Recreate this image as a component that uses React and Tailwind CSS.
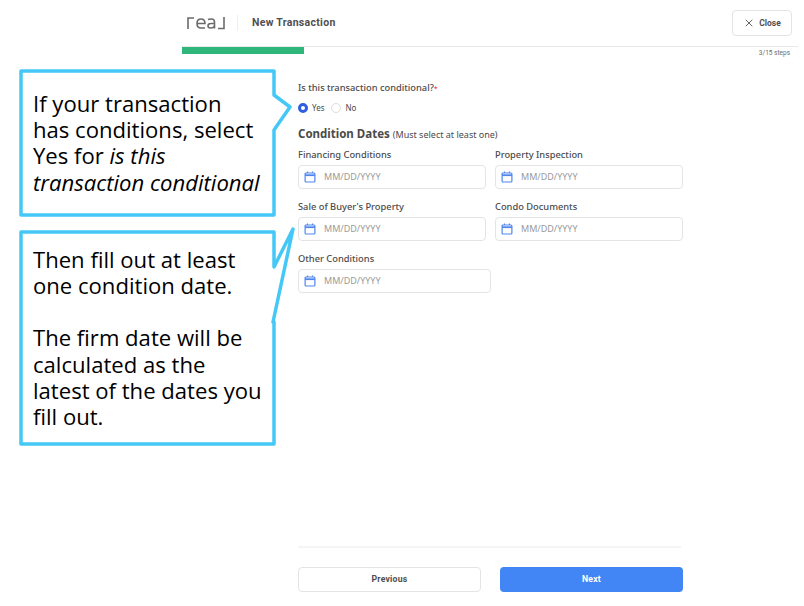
import { X } from 'lucide-react';

const ui = { fontFamily: '"Noto Sans", sans-serif' };

function CalendarIcon() {
  return (
    <svg width="12" height="12" viewBox="0 0 12 12" fill="none" stroke="#4f86f0" strokeWidth="1.2">
      <rect x="1.1" y="2" width="9.8" height="9" rx="1" />
      <path d="M1.1 4.2H10.9" strokeWidth="1.8" />
      <path d="M3.5 0.6V2M8.5 0.6V2" />
    </svg>
  );
}

function DateField({ label, wide }) {
  return (
    <div>
      <div className="h-[12px] text-[9.3px] leading-[12px] font-medium text-[#4b4b4b]">{label}</div>
      <div
        className={`mt-[4px] flex h-[24px] items-center rounded-[4px] border border-[#e3e4e8] pl-[5px] ${wide ? 'w-[193px]' : 'w-[188px]'}`}
      >
        <CalendarIcon />
        <span className="ml-[8px] text-[9px] text-[#9a9a9a]">MM/DD/YYYY</span>
      </div>
    </div>
  );
}

function Logo() {
  return (
    <svg width="38" height="14" viewBox="0 0 38 14" fill="none" stroke="#6b6b6b" strokeWidth="1.6">
      <path d="M1 13V2H7" />
      <path d="M10 7.5H18C18 4.5 16.5 3 14 3C11.5 3 10 5 10 7.5C10 10.5 11.5 12 14 12H18" />
      <path d="M21 3.5C22 3 23 3 24.5 3C26.5 3 27.5 4 27.5 6V12.5M27.5 7.5H24C22 7.5 21 8.5 21 10C21 11.5 22 12 23.5 12C25.5 12 27.5 11 27.5 9" />
      <path d="M37 1V12.5H31" />
    </svg>
  );
}

export default function App() {
  return (
    <div className="relative flex h-[606px] w-[804px] flex-col overflow-hidden bg-white" style={ui}>
      {/* Top bar */}
      <div className="flex h-[46px] items-center pl-[187px] pr-[12px]">
        <Logo />
        <div className="ml-[12px] h-[16px] w-px bg-[#eeeeee]" />
        <span
          className="ml-[14px] text-[10.5px] font-bold tracking-[0.3px] text-[#4f4f4f]"
          style={{ fontFamily: 'Roboto, sans-serif' }}
        >
          New Transaction
        </span>
        <div
          className="ml-auto flex h-[26px] w-[60px] items-center justify-center gap-[4px] rounded-[4px] border border-[#e3e4e8] text-[8.5px] font-bold text-[#4f4f4f]"
          style={{ fontFamily: 'Roboto, sans-serif' }}
        >
          <X size={12} strokeWidth={1.75} />
          Close
        </div>
      </div>

      {/* Progress */}
      <div className="ml-[182px] mr-[6px] border-t border-[#e8e8e8]">
        <div className="flex h-[7px]">
          <div className="w-[122px] bg-[#2fb67a]" />
        </div>
        <div
          className="-mt-[5px] pr-[8px] text-right text-[6.5px] leading-[8px] text-[#6b6b6b]"
          style={{ fontFamily: 'Roboto, sans-serif' }}
        >
          3/15 steps
        </div>
      </div>

      {/* Form */}
      <div className="ml-[298px] flex w-[385px] flex-1 flex-col pt-[25px] pb-[14px]">
        <div className="h-[12px] text-[9.3px] leading-[12px] font-medium text-[#4b4b4b]">
          Is this transaction conditional?<span className="text-[7px] text-[#e5484d]">*</span>
        </div>
        <div className="mt-[8px] flex h-[12px] items-center text-[8px] text-[#4b4b4b]">
          <span className="h-[10px] w-[10px] rounded-full border-[3px] border-[#2f5fe0] bg-white" />
          <span className="ml-[4px]">Yes</span>
          <span className="ml-[7px] h-[10px] w-[10px] rounded-full border border-[#dddddd]" />
          <span className="ml-[4px]">No</span>
        </div>
        <div className="mt-[11px] flex h-[16px] items-baseline text-[#4b4b4b]">
          <span className="text-[11.5px] font-bold">Condition Dates</span>
          <span className="ml-[3px] text-[9px]">(Must select at least one)</span>
        </div>
        <div className="mt-[8px] grid grid-cols-[188px_188px] gap-x-[9px] gap-y-[12px]">
          <DateField label="Financing Conditions" />
          <DateField label="Property Inspection" />
          <DateField label="Sale of Buyer's Property" />
          <DateField label="Condo Documents" />
          <DateField label="Other Conditions" wide />
        </div>

        <div className="mt-auto h-[2px] w-[383px] bg-[#f5f5f6]" />
        <div
          className="mt-[19px] flex gap-[19px] text-[8.7px] font-bold tracking-[0.2px]"
          style={{ fontFamily: 'Roboto, sans-serif' }}
        >
          <div className="flex h-[25px] w-[183px] items-center justify-center rounded-[4px] border-[1.5px] border-[#e3e4e8] text-[#4f4f4f]">
            Previous
          </div>
          <div className="flex h-[25px] w-[183px] items-center justify-center rounded-[4px] bg-[#4285f5] text-white">
            Next
          </div>
        </div>
      </div>

      {/* Callouts over the page */}
      <div
        className="absolute top-0 left-0 h-[606px] w-[300px] text-[22.1px] leading-[26.2px] text-black"
        style={{ fontFamily: '"Open Sans", sans-serif' }}
      >
        <svg width="300" height="460" className="absolute top-0 left-0" fill="white" stroke="#45c8f5" strokeWidth="3.5" strokeLinejoin="round">
          <path d="M21 71H274V95L290 107L274 130V215H21Z" />
          <path d="M21 232H274V267L293 229L273 322L274 322V444H21Z" />
        </svg>
        <div className="absolute top-[90px] left-[33px] w-[232px]">
          If your transaction
          <br />
          has conditions, select
          <br />
          Yes for <em>is this</em>
          <br />
          <em>transaction conditional</em>
        </div>
        <div className="absolute top-[246px] left-[33px] w-[230px]">
          <div>Then fill out at least one condition date.</div>
          <div className="mt-[26px]">The firm date will be calculated as the latest of the dates you fill out.</div>
        </div>
      </div>
    </div>
  );
}
